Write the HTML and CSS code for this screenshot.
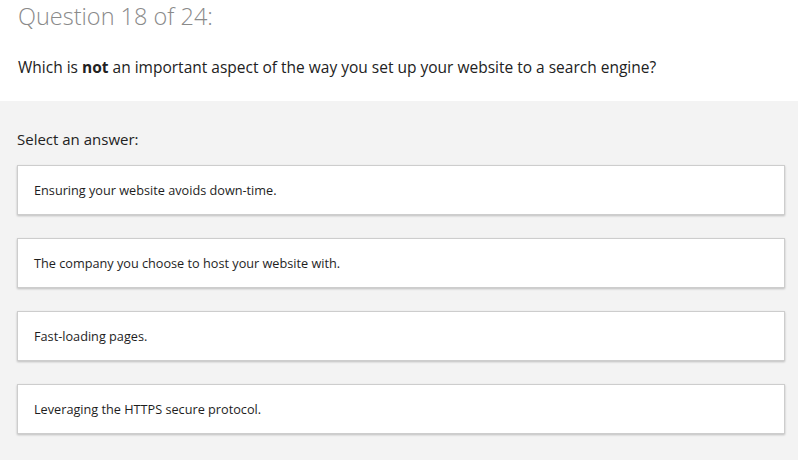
FILE: index.html
```html
<!DOCTYPE html>
<html lang="en">
<head>
<meta charset="utf-8">
<title>Quiz</title>
<link rel="stylesheet" href="styles.css">
</head>
<body>
<header class="quiz-head">
  <h1 class="quiz-count">Question 18 of 24:</h1>
  <p class="quiz-question">Which is <strong>not</strong> an important aspect of the way you set up your website to a search engine?</p>
</header>
<section class="quiz-body">
  <p class="quiz-prompt">Select an answer:</p>
  <ul class="answers">
    <li class="answer">Ensuring your website avoids down-time.</li>
    <li class="answer">The company you choose to host your website with.</li>
    <li class="answer">Fast-loading pages.</li>
    <li class="answer">Leveraging the HTTPS secure protocol.</li>
  </ul>
</section>
</body>
</html>
```

FILE: styles.css
```css
html, body {
  margin: 0;
  padding: 0;
}

body {
  font-family: "Open Sans", "Noto Sans", sans-serif;
  color: #222;
  background: #f3f3f3;
  height: 460px;
  overflow: hidden;
}

.quiz-head {
  background: #fff;
  padding: 0 18px;
  height: 101px;
  box-sizing: border-box;
  overflow: hidden;
}

.quiz-count {
  margin: 0;
  padding-top: 1px;
  font-size: 23.5px;
  font-weight: 300;
  line-height: 30px;
  color: #8a8a8a;
}

.quiz-question {
  margin: 25px 0 0;
  font-size: 15.5px;
  line-height: 22px;
  color: #222;
}

.quiz-question strong {
  font-weight: 700;
}

.quiz-body {
  padding: 0 13px 0 17px;
}

.quiz-prompt {
  margin: 0;
  padding-top: 28px;
  font-size: 15px;
  line-height: 20px;
  color: #222;
}

.answers {
  list-style: none;
  margin: 16px 0 0;
  padding: 0;
  display: flex;
  flex-direction: column;
  gap: 23px;
}

.answer {
  background: #fff;
  border: 1px solid #cdcdcd;
  box-shadow: 0 1px 2px rgba(0, 0, 0, 0.22);
  height: 50px;
  box-sizing: border-box;
  padding: 0 16px;
  display: flex;
  align-items: center;
  font-size: 12.7px;
  color: #1e1e1e;
}
```
